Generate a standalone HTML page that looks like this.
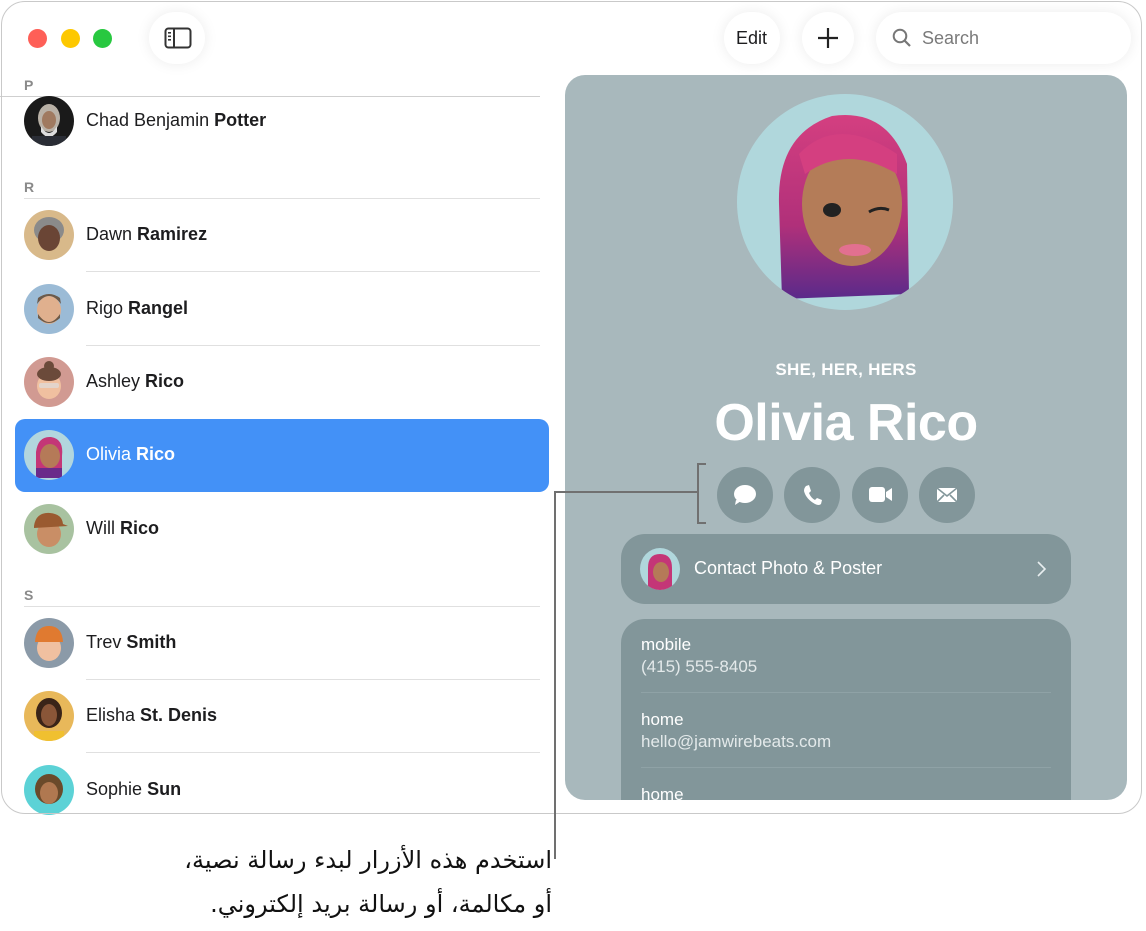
<!DOCTYPE html>
<html><head><meta charset="utf-8">
<style>
*{margin:0;padding:0;box-sizing:border-box}
body{width:1146px;height:931px;background:#fff;font-family:"Liberation Sans","DejaVu Sans",sans-serif;position:relative;overflow:hidden;color:#1d1d1f}
.win{position:absolute;left:0;top:0;width:1143px;height:815px;border-radius:24px;background:#fff;overflow:hidden}
.frame{position:absolute;left:1px;top:1px;width:1141px;height:813px;border:1.5px solid #c9c9c9;border-radius:24px;pointer-events:none}
.abs{position:absolute}
.dot{position:absolute;top:29px;width:19px;height:19px;border-radius:50%}
.pill{position:absolute;background:#fff;border-radius:28px;box-shadow:0 0 14px rgba(0,0,0,0.08)}
.hdr{position:absolute;left:24px;font-size:14px;font-weight:bold;color:#8a8a8a}
.line{position:absolute;height:1px;background:#e0e0e0}
.row{position:absolute;left:24px;height:50px;width:520px}
.av{position:absolute;left:0;top:0;width:50px;height:50px;border-radius:50%;overflow:hidden}
.nm{position:absolute;left:62px;top:14px;font-size:18px;color:#1d1d1f;white-space:nowrap}
.nm b{font-weight:bold}
.panel{position:absolute;left:565px;top:75px;width:562px;height:725px;background:#a8b8bc;border-radius:20px;overflow:hidden}
.btn{position:absolute;top:392px;width:56px;height:56px;border-radius:50%;background:#82969a}
.card{position:absolute;left:56px;width:450px;background:#82969a;border-radius:24px}
.lbl{position:absolute;left:20px;font-size:17px;color:#fff}
.val{position:absolute;left:20px;font-size:17px;color:#e3e9ea}
.sep{position:absolute;left:20px;right:20px;height:1px;background:#8fa2a6}
.callout{position:absolute;background:#707070}
</style></head><body>
<div class="win">
  <div class="dot" style="left:28px;background:#fe5f57"></div>
  <div class="dot" style="left:61px;background:#fdc800"></div>
  <div class="dot" style="left:93px;background:#28c840"></div>
  <div class="pill" style="left:149px;top:12px;width:56px;height:52px"></div>
  <svg class="abs" style="left:164px;top:27px" width="28" height="22" viewBox="0 0 28 22"><rect x="1.5" y="1.5" width="25" height="19" rx="3" fill="none" stroke="#333" stroke-width="2"/><line x1="10" y1="2" x2="10" y2="20" stroke="#333" stroke-width="2"/><rect x="4" y="5" width="3" height="1.6" fill="#333"/><rect x="4" y="8.5" width="3" height="1.6" fill="#333"/><rect x="4" y="12" width="3" height="1.6" fill="#333"/></svg>
  <div class="pill" style="left:724px;top:12px;width:56px;height:52px"></div>
  <div class="abs" style="left:736px;top:28px;font-size:18px;color:#1d1d1f">Edit</div>
  <div class="pill" style="left:802px;top:12px;width:52px;height:52px"></div>
  <svg class="abs" style="left:817px;top:27px" width="22" height="22"><line x1="11" y1="1" x2="11" y2="21" stroke="#222" stroke-width="2.2"/><line x1="1" y1="11" x2="21" y2="11" stroke="#222" stroke-width="2.2"/></svg>
  <div class="pill" style="left:876px;top:12px;width:255px;height:52px"></div>
  <svg class="abs" style="left:892px;top:28px" width="20" height="20"><circle cx="8" cy="8" r="6.3" fill="none" stroke="#777" stroke-width="2"/><line x1="12.5" y1="12.5" x2="18" y2="18" stroke="#777" stroke-width="2.2"/></svg>
  <div class="abs" style="left:922px;top:28px;font-size:18px;color:#7a7a7a">Search</div>

  <div class="hdr" style="top:77px">P</div>
  <div class="line" style="left:0;top:96px;width:540px;background:#cfcfcf"></div>
  <div class="row" style="top:96px"><div class="av" style="background:#1a1a1a"><svg width="50" height="50"><ellipse cx="25" cy="22" rx="11" ry="14" fill="#b9b1a6"/><ellipse cx="25" cy="24" rx="7" ry="9" fill="#a07a60"/><path d="M17 30 Q25 44 33 30 L33 36 Q25 46 17 36Z" fill="#ddd"/><rect x="8" y="40" width="34" height="12" fill="#2a2d35"/></svg></div><div class="nm">Chad Benjamin <b>Potter</b></div></div>

  <div class="hdr" style="top:179px">R</div>
  <div class="line" style="left:24px;top:198px;width:516px"></div>
  <div class="row" style="top:210px"><div class="av" style="background:#d8b98a"><svg width="50" height="50"><ellipse cx="25" cy="20" rx="15" ry="13" fill="#8a8a8a"/><ellipse cx="25" cy="28" rx="11" ry="13" fill="#6a4535"/></svg></div><div class="nm">Dawn <b>Ramirez</b></div></div>
  <div class="line" style="left:86px;top:271px;width:454px"></div>
  <div class="row" style="top:284px"><div class="av" style="background:#9bbbd6"><svg width="50" height="50"><ellipse cx="25" cy="26" rx="12" ry="14" fill="#e0b08e"/><path d="M13 20 Q25 4 37 20 L36 14 Q25 6 14 14Z" fill="#6c5a4a"/><path d="M14 30 Q25 46 36 30 L36 34 Q25 44 14 34Z" fill="#6d5a48"/></svg></div><div class="nm">Rigo <b>Rangel</b></div></div>
  <div class="line" style="left:86px;top:345px;width:454px"></div>
  <div class="row" style="top:357px"><div class="av" style="background:#d19a92"><svg width="50" height="50"><ellipse cx="25" cy="29" rx="12" ry="13" fill="#f0c0a0"/><ellipse cx="25" cy="17" rx="12" ry="7" fill="#6b4a3a"/><circle cx="25" cy="9" r="5" fill="#6b4a3a"/><rect x="15" y="26" width="20" height="5" rx="2" fill="#ddd" opacity=".7"/></svg></div><div class="nm">Ashley <b>Rico</b></div></div>

  <div class="abs" style="left:15px;top:419px;width:534px;height:73px;background:#4391f7;border-radius:10px"></div>
  <div class="row" style="top:430px"><div class="av" style="background:#b2d6de"><svg width="50" height="50"><path d="M12 22 Q14 6 27 7 Q40 9 38 26 L38 48 L12 48Z" fill="#c43677"/><path d="M12 38 L38 38 L38 48 L12 48Z" fill="#6a2a8a"/><ellipse cx="26" cy="26" rx="10" ry="12" fill="#b57a58"/></svg></div><div class="nm" style="color:#fff">Olivia <b>Rico</b></div></div>

  <div class="row" style="top:504px"><div class="av" style="background:#a8c2a0"><svg width="50" height="50"><ellipse cx="25" cy="30" rx="12" ry="13" fill="#c98e66"/><path d="M10 22 Q12 8 26 9 Q38 10 39 20 L44 22 L10 24Z" fill="#9a5a30"/></svg></div><div class="nm"><span>Will</span> <b>Rico</b></div></div>

  <div class="hdr" style="top:587px">S</div>
  <div class="line" style="left:24px;top:606px;width:516px"></div>
  <div class="row" style="top:618px"><div class="av" style="background:#8b9aa8"><svg width="50" height="50"><ellipse cx="25" cy="30" rx="12" ry="13" fill="#f0c0a0"/><path d="M11 24 Q12 8 25 8 Q38 8 39 24Z" fill="#e07a30"/></svg></div><div class="nm">Trev <b>Smith</b></div></div>
  <div class="line" style="left:86px;top:679px;width:454px"></div>
  <div class="row" style="top:691px"><div class="av" style="background:#e8b85a"><svg width="50" height="50"><ellipse cx="25" cy="22" rx="13" ry="15" fill="#3a2418"/><ellipse cx="25" cy="24" rx="8" ry="11" fill="#8a5638"/><rect x="10" y="40" width="30" height="12" fill="#f0c030"/></svg></div><div class="nm">Elisha <b>St. Denis</b></div></div>
  <div class="line" style="left:86px;top:752px;width:454px"></div>
  <div class="row" style="top:765px"><div class="av" style="background:#5cd2d6"><svg width="50" height="50"><ellipse cx="25" cy="24" rx="14" ry="15" fill="#6a4a2a"/><ellipse cx="25" cy="28" rx="9" ry="11" fill="#b07850"/></svg></div><div class="nm">Sophie <b>Sun</b></div></div>

  <div class="panel">
    <div class="abs" style="left:172px;top:19px;width:216px;height:216px;border-radius:50%;background:#b0d7dc;overflow:hidden">
      <svg width="216" height="216" viewBox="0 0 216 216"><defs><linearGradient id="h" x1="0" y1="0" x2="0" y2="1"><stop offset="0" stop-color="#d43f80"/><stop offset=".6" stop-color="#b0307a"/><stop offset="1" stop-color="#5a2a8a"/></linearGradient></defs>
      <path d="M42 110 Q40 40 95 22 Q150 14 170 70 L172 200 L45 205Z" fill="url(#h)"/>
      <ellipse cx="115" cy="110" rx="50" ry="62" fill="#b47c58"/>
      <path d="M62 60 Q100 20 160 60 L160 80 Q110 50 68 80Z" fill="#d43f80"/>
      <ellipse cx="95" cy="116" rx="9" ry="7" fill="#222"/><path d="M132 118 Q142 112 152 116" stroke="#222" stroke-width="3" fill="none"/>
      <ellipse cx="118" cy="156" rx="16" ry="6" fill="#e27090"/></svg>
    </div>
    <div class="abs" style="left:0;width:562px;top:285px;text-align:center;font-size:17px;font-weight:bold;color:#fff;letter-spacing:.3px">SHE, HER, HERS</div>
    <div class="abs" style="left:0;width:562px;top:318px;text-align:center;font-size:52px;font-weight:bold;color:#fff;letter-spacing:-.5px">Olivia Rico</div>
    <div class="btn" style="left:152px"><svg width="56" height="56"><ellipse cx="28" cy="27" rx="11" ry="9" fill="#fff"/><path d="M19 33 L18 38 L24 34Z" fill="#fff"/></svg></div>
    <div class="btn" style="left:219px"><svg width="56" height="56" viewBox="0 0 56 56"><path d="M22 19 L25 18 L27 24 L25 26 Q27 31 31 33 L33 31 L38 33 L37 37 Q35 39 31 37 Q22 32 20 24 Q20 21 22 19Z" fill="#fff"/></svg></div>
    <div class="btn" style="left:287px"><svg width="56" height="56"><rect x="17" y="20" width="16" height="15" rx="3" fill="#fff"/><path d="M34 25 L40 21 L40 34 L34 30Z" fill="#fff"/></svg></div>
    <div class="btn" style="left:354px"><svg width="56" height="56"><rect x="18" y="21" width="20" height="14" fill="#fff"/><path d="M18 21 L28 29 L38 21 M18 35 L25 28 M38 35 L31 28" stroke="#82969a" stroke-width="1.6" fill="none"/></svg></div>
    <div class="card" style="top:459px;height:70px">
      <div class="abs" style="left:19px;top:14px;width:40px;height:42px;border-radius:50%;background:#b0d7dc;overflow:hidden"><svg width="40" height="42"><path d="M8 20 Q8 6 20 6 Q32 6 32 20 L32 42 L8 42Z" fill="#c43677"/><ellipse cx="21" cy="24" rx="8" ry="10" fill="#b57a58"/></svg></div>
      <div class="abs" style="left:73px;top:24px;font-size:18px;color:#fff">Contact Photo &amp; Poster</div>
      <svg class="abs" style="left:414px;top:26px" width="12" height="18"><path d="M3 2 L10 9 L3 16" stroke="#e8eef0" stroke-width="1.6" fill="none"/></svg>
    </div>
    <div class="card" style="top:544px;height:220px">
      <div class="lbl" style="top:16px">mobile</div>
      <div class="val" style="top:38px">(415) 555-8405</div>
      <div class="sep" style="top:73px"></div>
      <div class="lbl" style="top:91px">home</div>
      <div class="val" style="top:113px">hello@jamwirebeats.com</div>
      <div class="sep" style="top:148px"></div>
      <div class="lbl" style="top:166px">home</div>
    </div>
  </div>
</div>
<div class="frame"></div>

<div class="callout" style="left:554px;top:491px;width:1.5px;height:368px"></div>
<div class="callout" style="left:554px;top:491px;width:144px;height:1.5px"></div>
<div class="callout" style="left:697px;top:463px;width:1.5px;height:60px"></div>
<div class="callout" style="left:697px;top:463px;width:9px;height:1.5px"></div>
<div class="callout" style="left:697px;top:522px;width:9px;height:1.5px"></div>

<div class="abs" dir="rtl" style="right:594px;top:838px;font-size:24px;line-height:44px;color:#111;text-align:right;font-family:'DejaVu Sans',sans-serif;white-space:nowrap">استخدم هذه الأزرار لبدء رسالة نصية،<br>أو مكالمة، أو رسالة بريد إلكتروني.</div>
</body></html>
